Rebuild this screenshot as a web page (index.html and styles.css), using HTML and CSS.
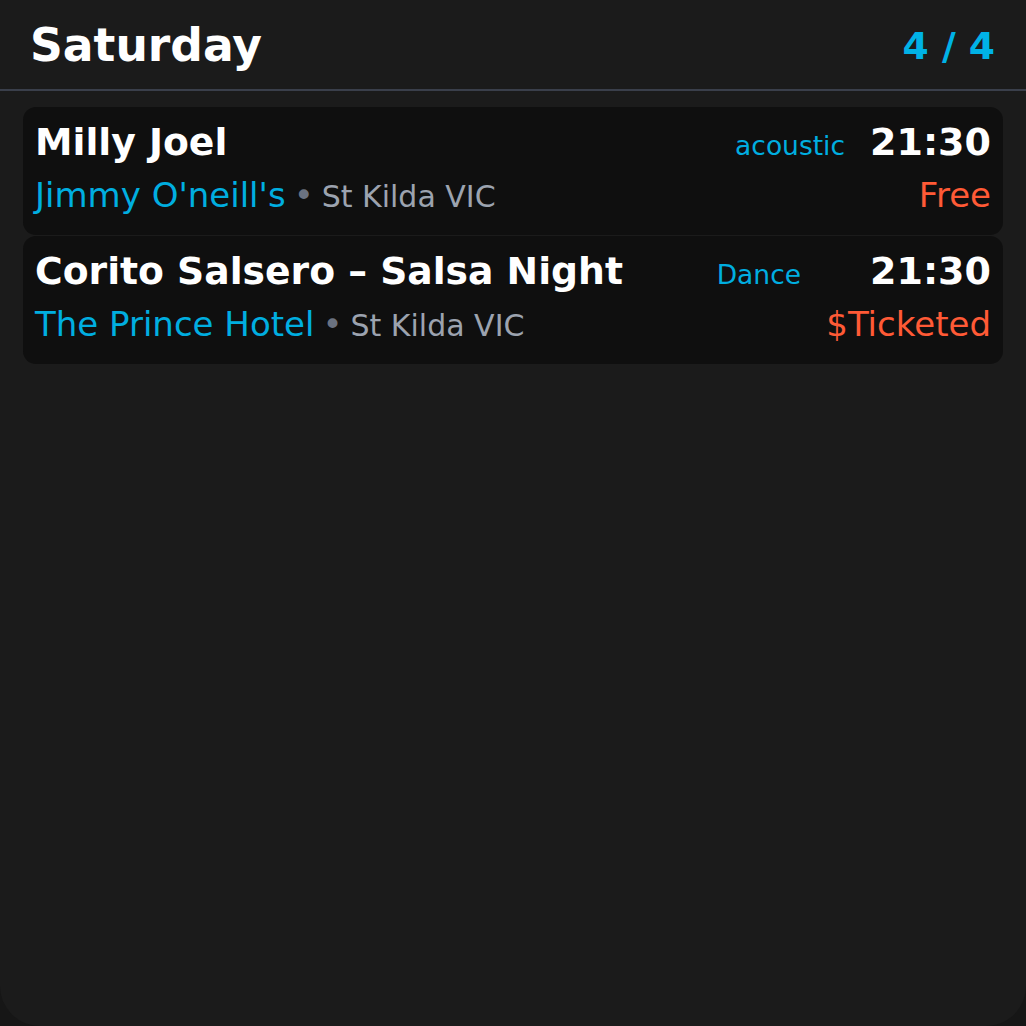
FILE: index.html
```html
<!DOCTYPE html>
<html>
<head>
<meta charset="utf-8">
<link rel="stylesheet" href="styles.css">
</head>
<body>
<div class="panel">
  <header class="header">
    <h1 class="day">Saturday</h1>
    <div class="count">4 / 4</div>
  </header>
  <div class="list">
    <div class="card">
      <div class="row">
        <div class="title">Milly Joel</div>
        <div class="tag">acoustic</div>
        <div class="time">21:30</div>
      </div>
      <div class="row row-sub">
        <div class="place"><span class="venue">Jimmy O'neill's</span><span class="dot">•</span><span class="suburb">St Kilda VIC</span></div>
        <div class="price">Free</div>
      </div>
    </div>
    <div class="card">
      <div class="row">
        <div class="title">Corito Salsero – Salsa Night</div>
        <div class="tag tag-wide">Dance</div>
        <div class="time">21:30</div>
      </div>
      <div class="row row-sub">
        <div class="place"><span class="venue">The Prince Hotel</span><span class="dot">•</span><span class="suburb">St Kilda VIC</span></div>
        <div class="price">$Ticketed</div>
      </div>
    </div>
  </div>
</div>
</body>
</html>
```

FILE: styles.css
```css
* { box-sizing: border-box; }
html, body {
  margin: 0;
  padding: 0;
  background: #161616;
}
body {
  font-family: "DejaVu Sans", "Liberation Sans", sans-serif;
  color: #ffffff;
}
.panel {
  width: 1026px;
  height: 1026px;
  background: #1b1b1b;
  border-radius: 0 0 40px 40px;
  overflow: hidden;
}
.header {
  height: 91px;
  display: flex;
  align-items: center;
  justify-content: space-between;
  padding: 4px 31px 0 30px;
  border-bottom: 2px solid #3a3f4b;
}
.day {
  margin: 0;
  font-size: 45.6px;
  font-weight: bold;
  line-height: 1.2;
  color: #ffffff;
}
.count {
  font-size: 37.7px;
  font-weight: bold;
  color: #00b2e6;
  line-height: 1.2;
}
.list {
  display: flex;
  flex-direction: column;
  gap: 1px;
  padding: 16px 23px;
}
.card {
  background: #0f0f0f;
  border-radius: 13px;
  padding: 13px 12px 19.6px 12px;
  display: flex;
  flex-direction: column;
  gap: 9px;
}
.row {
  display: flex;
  align-items: baseline;
}
.title {
  flex: 1;
  font-size: 37.7px;
  font-weight: bold;
  line-height: 1.2;
  color: #ffffff;
}
.tag {
  font-size: 26.5px;
  color: #00aee0;
  margin-right: 25px;
  line-height: 1.2;
}
.tag-wide {
  margin-right: 69px;
}
.time {
  font-size: 38px;
  font-weight: bold;
  line-height: 1.2;
  color: #ffffff;
}
.place {
  flex: 1;
  display: flex;
  align-items: baseline;
  line-height: 1.2;
}
.venue {
  font-size: 34px;
  color: #00aee0;
}
.dot {
  font-size: 34px;
  color: #6b7280;
  margin: 0 8px;
}
.suburb {
  font-size: 30px;
  color: #9ca3af;
}
.price {
  font-size: 34px;
  color: #ff5a36;
  line-height: 1.2;
}
```
